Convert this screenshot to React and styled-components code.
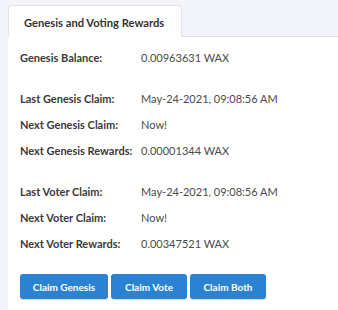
import React from "react";
import styled, { createGlobalStyle } from "styled-components";

const Global = createGlobalStyle`
  html, body { margin: 0; padding: 0; background: #f3f3fa; }
  body { font-family: Lato, "Open Sans", sans-serif; }
`;

const Page = styled.div`
  width: 338px;
  height: 310px;
  padding: 5px 0 0 8px;
  box-sizing: border-box;
  overflow: hidden;
`;

const TabBar = styled.div`
  display: flex;
  align-items: flex-end;
  height: 31px;
  border-bottom: 1px solid #dcdce4;
`;

const Tab = styled.div`
  height: 32px;
  width: 174px;
  box-sizing: border-box;
  margin-bottom: -1px;
  padding: 2px 0 0 15px;
  display: flex;
  align-items: center;
  background: #fff;
  border: 1px solid #e2e2ea;
  border-bottom: none;
  border-radius: 4px 4px 0 0;
  font-size: 11.2px;
  font-weight: 700;
  color: #333;
`;

const Panel = styled.div`
  background: #fff;
  padding: 7px 0 0 12px;
  height: 280px;
  box-sizing: border-box;
`;

const Group = styled.div`
  display: flex;
  flex-direction: column;
  & + & {
    margin-top: 15px;
  }
`;

const Row = styled.div`
  display: grid;
  grid-template-columns: 121px 1fr;
  height: 26px;
  align-items: center;
  font-size: 11px;
`;

const Label = styled.span`
  font-weight: 700;
  color: #3a3a3a;
`;

const Value = styled.span`
  color: #4a4a4a;
`;

const Buttons = styled.div`
  display: flex;
  gap: 3px;
  margin-top: 18px;
`;

const Button = styled.button`
  height: 25px;
  width: ${(p) => p.$w}px;
  background: #2b82d3;
  color: #fff;
  border: none;
  border-radius: 3px;
  font-family: Lato, sans-serif;
  font-weight: 700;
  font-size: 10px;
  padding: 0;
  box-shadow: 0 1px 1px rgba(0,0,0,0.15);
`;

const groups = [
  [["Genesis Balance:", "0.00963631 WAX"]],
  [
    ["Last Genesis Claim:", "May-24-2021, 09:08:56 AM"],
    ["Next Genesis Claim:", "Now!"],
    ["Next Genesis Rewards:", "0.00001344 WAX"],
  ],
  [
    ["Last Voter Claim:", "May-24-2021, 09:08:56 AM"],
    ["Next Voter Claim:", "Now!"],
    ["Next Voter Rewards:", "0.00347521 WAX"],
  ],
];

export default function App() {
  return (
    <Page>
      <Global />
      <TabBar>
        <Tab>Genesis and Voting Rewards</Tab>
      </TabBar>
      <Panel>
        {groups.map((g, i) => (
          <Group key={i}>
            {g.map(([l, v]) => (
              <Row key={l}>
                <Label>{l}</Label>
                <Value>{v}</Value>
              </Row>
            ))}
          </Group>
        ))}
        <Buttons>
          <Button $w={88}>Claim Genesis</Button>
          <Button $w={76}>Claim Vote</Button>
          <Button $w={76}>Claim Both</Button>
        </Buttons>
      </Panel>
    </Page>
  );
}
